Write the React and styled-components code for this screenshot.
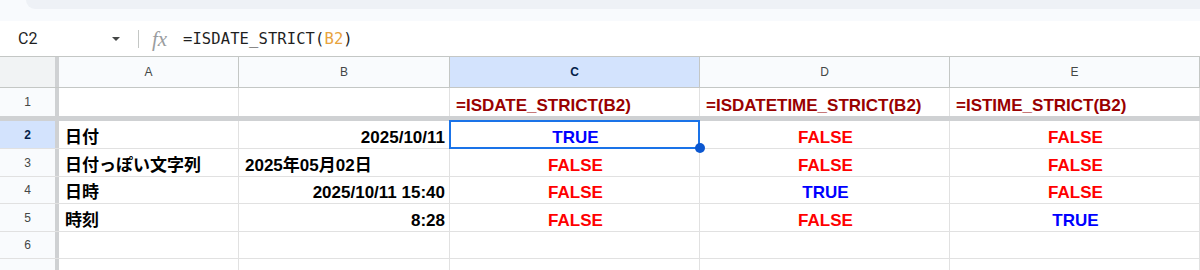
import React from 'react'
import styled, { createGlobalStyle, css } from 'styled-components'

const GlobalStyle = createGlobalStyle`
  html, body {
    margin: 0;
    padding: 0;
    background: #ffffff;
    overflow: hidden;
  }
  * { box-sizing: border-box; }
`

const COLS = '59px 180px 211px 250px 250px 1fr'

const Page = styled.div`
  width: 1200px;
  height: 270px;
  overflow: hidden;
  font-family: "Liberation Sans", "Noto Sans CJK JP", Arial, sans-serif;
`

const TopStrip = styled.div`
  height: 21px;
  background: #f8fafd;
`

const ToolbarPill = styled.div`
  height: 9px;
  margin-left: 26px;
  background: #eef1f6;
  border-bottom-left-radius: 12px;
`

const FormulaBar = styled.div`
  height: 36px;
  display: flex;
  align-items: center;
  border-bottom: 1px solid #c4c7c5;
  background: #fff;
`

const NameBox = styled.div`
  width: 130px;
  padding: 0 10px 0 18px;
  display: flex;
  align-items: center;
  justify-content: space-between;
`

const NameText = styled.span`
  font-family: Roboto, "Liberation Sans", sans-serif;
  font-size: 16px;
  color: #1f1f1f;
`

const Caret = styled.span`
  width: 0;
  height: 0;
  border-left: 4px solid transparent;
  border-right: 4px solid transparent;
  border-top: 4px solid #444746;
`

const Divider = styled.span`
  margin-left: 8px;
  width: 1px;
  height: 18px;
  background: #c4c7c5;
`

const FxLabel = styled.span`
  margin-left: 13px;
  width: 18px;
  font-family: "Liberation Serif", serif;
  font-style: italic;
  font-size: 21px;
  color: #9a9da0;
  line-height: 20px;
`

const FormulaText = styled.span`
  margin-left: 13px;
  font-family: "DejaVu Sans Mono", "Liberation Mono", monospace;
  font-size: 15.5px;
  color: #1f1f1f;
  letter-spacing: 0.1px;
`

const Ref = styled.span`
  color: #e8a33d;
`

const Grid = styled.div`
  display: flex;
  flex-direction: column;
`

const Row = styled.div`
  display: grid;
  grid-template-columns: ${COLS};
  height: ${p => p.$h}px;
  border-bottom: ${p => (p.$freeze ? '5px solid #cfd1d3' : p.$head ? '1px solid #c4c7c5' : '1px solid #e1e1e1')};
`

const Corner = styled.div`
  background: #f1f3f4;
  border-right: 4px solid #cfd1d3;
`

const ColHead = styled.div`
  display: flex;
  align-items: center;
  justify-content: center;
  font-size: 12px;
  color: #444746;
  background: #f9fbfd;
  border-right: 1px solid #c4c7c5;
  ${p => p.$active && css`
    background: #d3e3fd;
    color: #041e49;
    font-weight: bold;
  `}
`

const RowHead = styled.div`
  display: flex;
  align-items: center;
  justify-content: center;
  font-size: 12px;
  color: #444746;
  background: #f9fbfd;
  border-right: 4px solid #cfd1d3;
  ${p => p.$active && css`
    background: #d3e3fd;
    color: #041e49;
    font-weight: bold;
  `}
`

const TONES = {
  plain: '#000000',
  formula: '#990000',
  yes: '#0000ff',
  no: '#ff0000',
}

const Cell = styled.div`
  position: relative;
  display: flex;
  align-items: flex-end;
  justify-content: ${p => p.$align || 'flex-start'};
  padding: 0 4px 0 6px;
  border-right: 1px solid #e1e1e1;
  font-size: 17px;
  line-height: 20px;
  font-weight: bold;
  white-space: nowrap;
  color: ${p => TONES[p.$tone || 'plain']};
  ${p => p.$selected && css`
    &::after {
      content: '';
      position: absolute;
      top: -1px;
      left: -1px;
      right: -1px;
      bottom: -1px;
      border: 2px solid #1a73e8;
      pointer-events: none;
    }
  `}
`

const Handle = styled.span`
  position: absolute;
  right: -6px;
  bottom: -5px;
  width: 10px;
  height: 10px;
  border-radius: 50%;
  background: #0b57d0;
  z-index: 2;
`

const bool = v => (v ? { text: 'TRUE', tone: 'yes' } : { text: 'FALSE', tone: 'no' })

const rows = [
  { n: 2, h: 28, a: '日付', b: '2025/10/11', bRight: true, r: [true, false, false] },
  { n: 3, h: 28, a: '日付っぽい文字列', b: '2025年05月02日', bRight: false, r: [false, false, false] },
  { n: 4, h: 27, a: '日時', b: '2025/10/11 15:40', bRight: true, r: [false, true, false] },
  { n: 5, h: 28, a: '時刻', b: '8:28', bRight: true, r: [false, false, true] },
]

const EmptyRow = ({ n, h }) => (
  <Row $h={h}>
    <RowHead>{n}</RowHead>
    <Cell />
    <Cell />
    <Cell />
    <Cell />
    <Cell />
  </Row>
)

const App = () => {
  return (
    <Page>
      <GlobalStyle />
      <TopStrip>
        <ToolbarPill />
      </TopStrip>
      <FormulaBar>
        <NameBox>
          <NameText>C2</NameText>
          <Caret />
        </NameBox>
        <Divider />
        <FxLabel>fx</FxLabel>
        <FormulaText>
          =ISDATE_STRICT(<Ref>B2</Ref>)
        </FormulaText>
      </FormulaBar>
      <Grid>
        <Row $h={31} $head>
          <Corner />
          <ColHead>A</ColHead>
          <ColHead>B</ColHead>
          <ColHead $active>C</ColHead>
          <ColHead>D</ColHead>
          <ColHead>E</ColHead>
        </Row>
        <Row $h={33} $freeze>
          <RowHead>1</RowHead>
          <Cell />
          <Cell />
          <Cell $tone="formula">=ISDATE_STRICT(B2)</Cell>
          <Cell $tone="formula">=ISDATETIME_STRICT(B2)</Cell>
          <Cell $tone="formula">=ISTIME_STRICT(B2)</Cell>
        </Row>
        {rows.map(row => (
          <Row key={row.n} $h={row.h}>
            <RowHead $active={row.n === 2}>{row.n}</RowHead>
            <Cell>{row.a}</Cell>
            <Cell $align={row.bRight ? 'flex-end' : 'flex-start'}>{row.b}</Cell>
            {row.r.map((v, i) => {
              const res = bool(v)
              const selected = row.n === 2 && i === 0
              return (
                <Cell key={i} $align="center" $tone={res.tone} $selected={selected}>
                  {res.text}
                  {selected && <Handle />}
                </Cell>
              )
            })}
          </Row>
        ))}
        <EmptyRow n={6} h={27} />
        {/* row 7 is only a sliver at the bottom edge, its number sits below the frame */}
        <EmptyRow n="" h={28} />
      </Grid>
    </Page>
  )
}

export default App
